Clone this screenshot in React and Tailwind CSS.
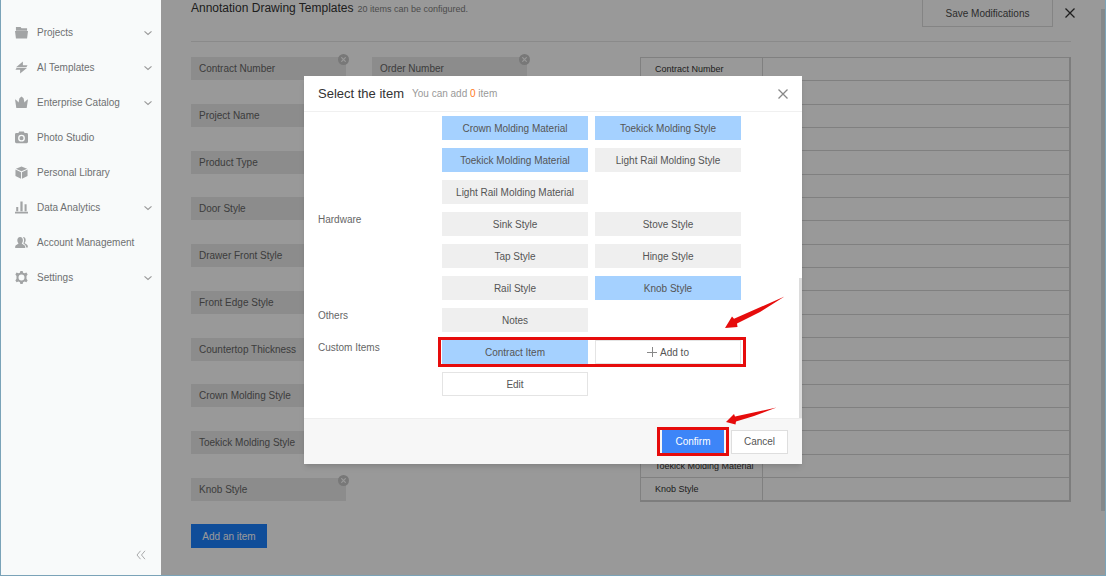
import React, { useState } from 'react';
import clsx from 'clsx';

const menu = [
  { label: 'Projects', icon: 'folder', expandable: true },
  { label: 'AI Templates', icon: 'bolt', expandable: true },
  { label: 'Enterprise Catalog', icon: 'crown', expandable: true },
  { label: 'Photo Studio', icon: 'camera' },
  { label: 'Personal Library', icon: 'cube' },
  { label: 'Data Analytics', icon: 'chart', expandable: true },
  { label: 'Account Management', icon: 'users' },
  { label: 'Settings', icon: 'gear', expandable: true },
];

// two chips per row, the last one stands alone
const chips = [
  'Contract Number', 'Order Number',
  'Project Name', '',
  'Product Type', '',
  'Door Style', '',
  'Drawer Front Style', '',
  'Front Edge Style', '',
  'Countertop Thickness', '',
  'Crown Molding Style', '',
  'Toekick Molding Style', '',
  'Knob Style',
];

const previewRows = ['Contract Number', ...Array(16).fill(''), 'Toekick Molding Material', 'Knob Style'];

const groups = [
  {
    title: '',
    items: ['Crown Molding Material', 'Toekick Molding Style', 'Toekick Molding Material', 'Light Rail Molding Style', 'Light Rail Molding Material'],
  },
  { title: 'Hardware', items: ['Sink Style', 'Stove Style', 'Tap Style', 'Hinge Style', 'Rail Style', 'Knob Style'] },
  { title: 'Others', items: ['Notes'] },
];

const icons = {
  folder: (
    <>
      <path d="M1 1h5l1 1.300h6V5H1z" />
      <path d="M0 5.500h14l-1 8H1z" />
    </>
  ),
  bolt: <path d="M8.500 0.500V4.500H13.500L12.300 6.700H1.200L8.500 0.500zM5.500 13.500V9.500H0.500L1.700 7.500H12.800z" />,
  crown: <path d="M0 3.500Q2.500 5 3.800 7L4.800 2.500 7 0.500 9.200 2.500 10.200 7Q11.500 5 14 3.500L12.600 13H1.400z" />,
  camera: (
    <path fillRule="evenodd" d="M4.500 0.500h5l0.800 1.700H12.500a1.500 1.500 0 0 1 1.500 1.500v8a1.500 1.500 0 0 1-1.500 1.500h-11A1.500 1.500 0 0 1 0 11.700V3.700a1.500 1.500 0 0 1 1.500-1.500h2.200zM7 4a3.700 3.700 0 1 0 0 7.400A3.700 3.700 0 0 0 7 4zM7 5.500a2.200 2.200 0 1 1 0 4.400a2.200 2.200 0 0 1 0-4.400z" />
  ),
  cube: <path d="M7 0.500l6 2.400L7 5.700 1 2.900zM0.500 3.700L6.500 6.700v7L0.500 10.900zM13.500 3.700L7.500 6.700v7l6-2.800z" />,
  chart: <path d="M1.300 6.500h2.200V11H1.300zM5.800 0.500h2.400V11H5.800zM10.300 3.500h2.200V11h-2.200zM0 11.500h14v2H0z" />,
  users: (
    <>
      <path d="M5.500 1C7.500 1 8.500 2.400 8.500 4.500 8.500 6 8 7 7.300 7.700c0 1.100 3.700 1.600 3.700 4V13H0.200v-1.300c0-2.400 3.600-2.900 3.600-4C3 7 2.500 6 2.500 4.500 2.500 2.400 3.500 1 5.500 1z" />
      <path d="M8.500 1c2 0 3 1.300 3 3.200 0 1.500-.6 2.500-1.200 3.200 0 1 3.500 1.500 3.500 3.800V12.500H12c0-2.600-1.500-3.600-3-4.500 1-2 1.300-5-.5-7z" />
    </>
  ),
  gear: (
    <path fillRule="evenodd" d="M5.800 0h2.400l.5 1.800 1.600.7 2-.8 1.300 2-1.200 1.700v2.900l1.200 1.800-1.300 2-2-.7-1.600.7-.5 1.900H5.800l-.5-1.900-1.600-.7-2 .7-1.300-2 1.200-1.800V5.400L.400 3.700l1.300-2 2 .8 1.600-.7zM7 3.800a3.200 3.200 0 1 0 0 6.400A3.200 3.200 0 0 0 7 3.800z" />
  ),
};

const Chevron = () => (
  <svg className="h-2 w-2" viewBox="0 0 8 8" fill="none" stroke="#999999" strokeWidth="1.1"><path d="M0.500 2.300L4 5.500l3.500-3.200" /></svg>
);

const Cross = ({ className, thick }) => (
  <svg className={className} viewBox="0 0 10 10" fill="none" stroke="currentColor" strokeWidth={thick ? 2.4 : 1.3}><path d="M0.500 0.500l9 9M9.500 0.500l-9 9" /></svg>
);

const Sidebar = () => (
  <aside className="relative z-20 flex w-40 shrink-0 flex-col justify-between bg-[#f8fafa] py-[15px] text-[#6e7071]">
    <nav>
      {menu.map(({ label, icon, expandable }) => (
        <a key={label} href="#" className="flex h-[35px] items-center pl-[14px] pr-[9px]">
          <svg className="mr-[9px] h-[13px] w-[13px]" viewBox="0 0 14 14" fill="#a2a4a5">{icons[icon]}</svg>
          <span className="flex-1">{label}</span>
          {expandable && <Chevron />}
        </a>
      ))}
    </nav>
    <button aria-label="Collapse menu" className="mr-[15px] self-end">
      <svg className="h-[10px] w-[10px]" viewBox="0 0 10 10" fill="none" stroke="#a8a9aa"><path d="M4.500 0.800L1 5l3.500 4.200M9 0.800L5.500 5 9 9.200" /></svg>
    </button>
  </aside>
);

const FieldChip = ({ label }) => (
  <div className="relative flex h-[23px] items-center bg-[#e9e9e9] pl-2 text-[#666666]">
    {label}
    <button aria-label={`Remove ${label}`} className="absolute -right-[3px] -top-[3px] flex h-[11px] w-[11px] items-center justify-center rounded-full bg-[#c8c8c8] text-white">
      <Cross className="h-[5px] w-[5px]" thick />
    </button>
  </div>
);

const Editor = () => (
  <main className="flex min-w-0 flex-1 bg-white">
    <div className="min-w-0 flex-1 px-[30px]">
      <header className="flex h-[42px] items-start border-b border-[#e6e6e6]">
        <h1 className="text-[12px] leading-4 text-[#333333]">Annotation Drawing Templates</h1>
        <span className="ml-1 text-[9px] leading-[18px] text-[#808080]">20 items can be configured.</span>
        <button className="ml-auto mr-3 h-[27px] w-[131px] border border-t-0 border-[#dcdcdc] text-[#4c4c4c]">Save Modifications</button>
        <button aria-label="Close" className="-mr-1 mt-2 text-[#333333]"><Cross className="h-[10px] w-[10px]" /></button>
      </header>
      <div className="mt-[15px] flex justify-between">
        <div className="grid h-[444px] w-[336px] grid-cols-2 content-between gap-x-[26px]">
          {chips.map((c, i) => <FieldChip key={i} label={c} />)}
        </div>
        <table className="h-[445px] w-[431px] border-2 border-l border-t border-[#d0d0d0] text-[9px] leading-3 text-[#333333]">
          <tbody>
            {previewRows.map((label, i) => (
              <tr key={i} className="h-[23px]">
                <th scope="row" className="w-[122px] border border-[#d6d6d6] p-0 pl-[14px] text-left font-normal">{label}</th>
                <td className="border border-[#d6d6d6] p-0" />
              </tr>
            ))}
          </tbody>
        </table>
      </div>
      <button className="mt-[22px] h-6 w-[76px] bg-[#1a80ff] text-white">Add an item</button>
    </div>
    <div className="mt-[9px] h-[502px] w-1 bg-[#dde3e6]" />
  </main>
);

const Option = ({ label, selected, onClick }) => (
  <button onClick={onClick} className={clsx('h-6 text-[#555555]', selected ? 'bg-[#a5d1ff]' : 'bg-[#efefef]')}>{label}</button>
);

const Arrow = ({ className, d, viewBox }) => (
  <svg className={className} viewBox={viewBox} fill="#e60c0c"><path d={d} /></svg>
);

const ItemDialog = () => {
  const [selected, setSelected] = useState(['Crown Molding Material', 'Toekick Molding Style', 'Toekick Molding Material', 'Knob Style', 'Contract Item']);

  const toggle = (name) => setSelected((s) => (s.includes(name) ? s.filter((n) => n !== name) : [...s, name]));

  return (
    <div role="dialog" aria-label="Select the item" className="w-full max-w-[498px] bg-white shadow-md">
      <div className="flex h-9 items-center border-b border-[#f0f0f0] px-[14px]">
        <h2 className="text-[13px] text-[#333333]">Select the item</h2>
        <p className="ml-2 flex-1 text-[#999999]">You can add <span className="text-[#ff7a1a]">0</span> item</p>
        <button aria-label="Close dialog" className="text-[#888888]"><Cross className="h-[10px] w-[10px]" /></button>
      </div>

      <div className="relative flex flex-col gap-2 pb-[22px] pl-[14px] pt-1">
        {groups.map(({ title, items }) => (
          <section key={title} className="flex">
            <h3 className="w-[124px] leading-4 text-[#666666]">{title}</h3>
            <div className="grid w-[299px] grid-cols-2 gap-x-[7px] gap-y-2">
              {items.map((i) => <Option key={i} label={i} selected={selected.includes(i)} onClick={() => toggle(i)} />)}
            </div>
          </section>
        ))}
        <section className="flex">
          <h3 className="w-[124px] leading-4 text-[#666666]">Custom Items</h3>
          <div className="relative grid w-[299px] grid-cols-2 gap-x-[7px] gap-y-2">
            <Option label="Contract Item" selected={selected.includes('Contract Item')} onClick={() => toggle('Contract Item')} />
            <button className="flex h-6 items-center justify-center border border-[#e4e4e4] text-[#555555]">
              <svg className="mr-[3px] h-[10px] w-[10px]" viewBox="0 0 10 10" stroke="#888888"><path d="M0 5.500h10M5.500 0v10" /></svg>
              Add to
            </button>
            <button className="h-6 border border-[#e4e4e4] text-[#555555]">Edit</button>
            <div className="pointer-events-none absolute -left-1 -right-[5px] -top-[3px] h-[30px] border-[3px] border-[#e60c0c]" />
            <Arrow className="absolute -right-11 -top-11 h-8 w-[60px]" viewBox="0 0 60 32" d="M0 32L7 20.500L9 22.800L59.500 0.500L35 16L12 27.500L12.500 31z" />
          </div>
        </section>
        <div className="absolute bottom-0 right-0 h-[140px] w-[3px] bg-[#dcdcdc]" />
      </div>

      <div className="flex h-[46px] items-center justify-end gap-[7px] border-t border-[#eeeeee] bg-[#f7f7f7] pr-[14px]">
        <div className="relative flex">
          <button className="h-[23px] w-[62px] bg-[#3d85f8] text-white">Confirm</button>
          <div className="pointer-events-none absolute -inset-x-[5px] -inset-y-[3px] border-[3px] border-[#e60c0c]" />
          <Arrow className="absolute -right-[53px] -top-[23px] h-[18px] w-[51px]" viewBox="0 0 51 18" d="M0 15L8 7L9 9.500L50.500 0.500L28 9L10 14.500L9.500 17.500z" />
        </div>
        <button className="h-6 w-[57px] border border-[#dedede] bg-white text-[#555555]">Cancel</button>
      </div>
    </div>
  );
};

export default function App() {
  return (
    <div className="flex min-h-screen bg-white pb-0.5 pr-0.5 font-['Liberation_Sans',Arial,sans-serif] text-[10px]">
      <div className="relative flex flex-1 border-b border-l border-r border-[#7aa3b8]">
        <Sidebar />
        <Editor />
        <div className="absolute inset-0 z-10 flex items-start justify-center bg-black/40 pt-[76px]">
          <ItemDialog />
        </div>
      </div>
    </div>
  );
}
